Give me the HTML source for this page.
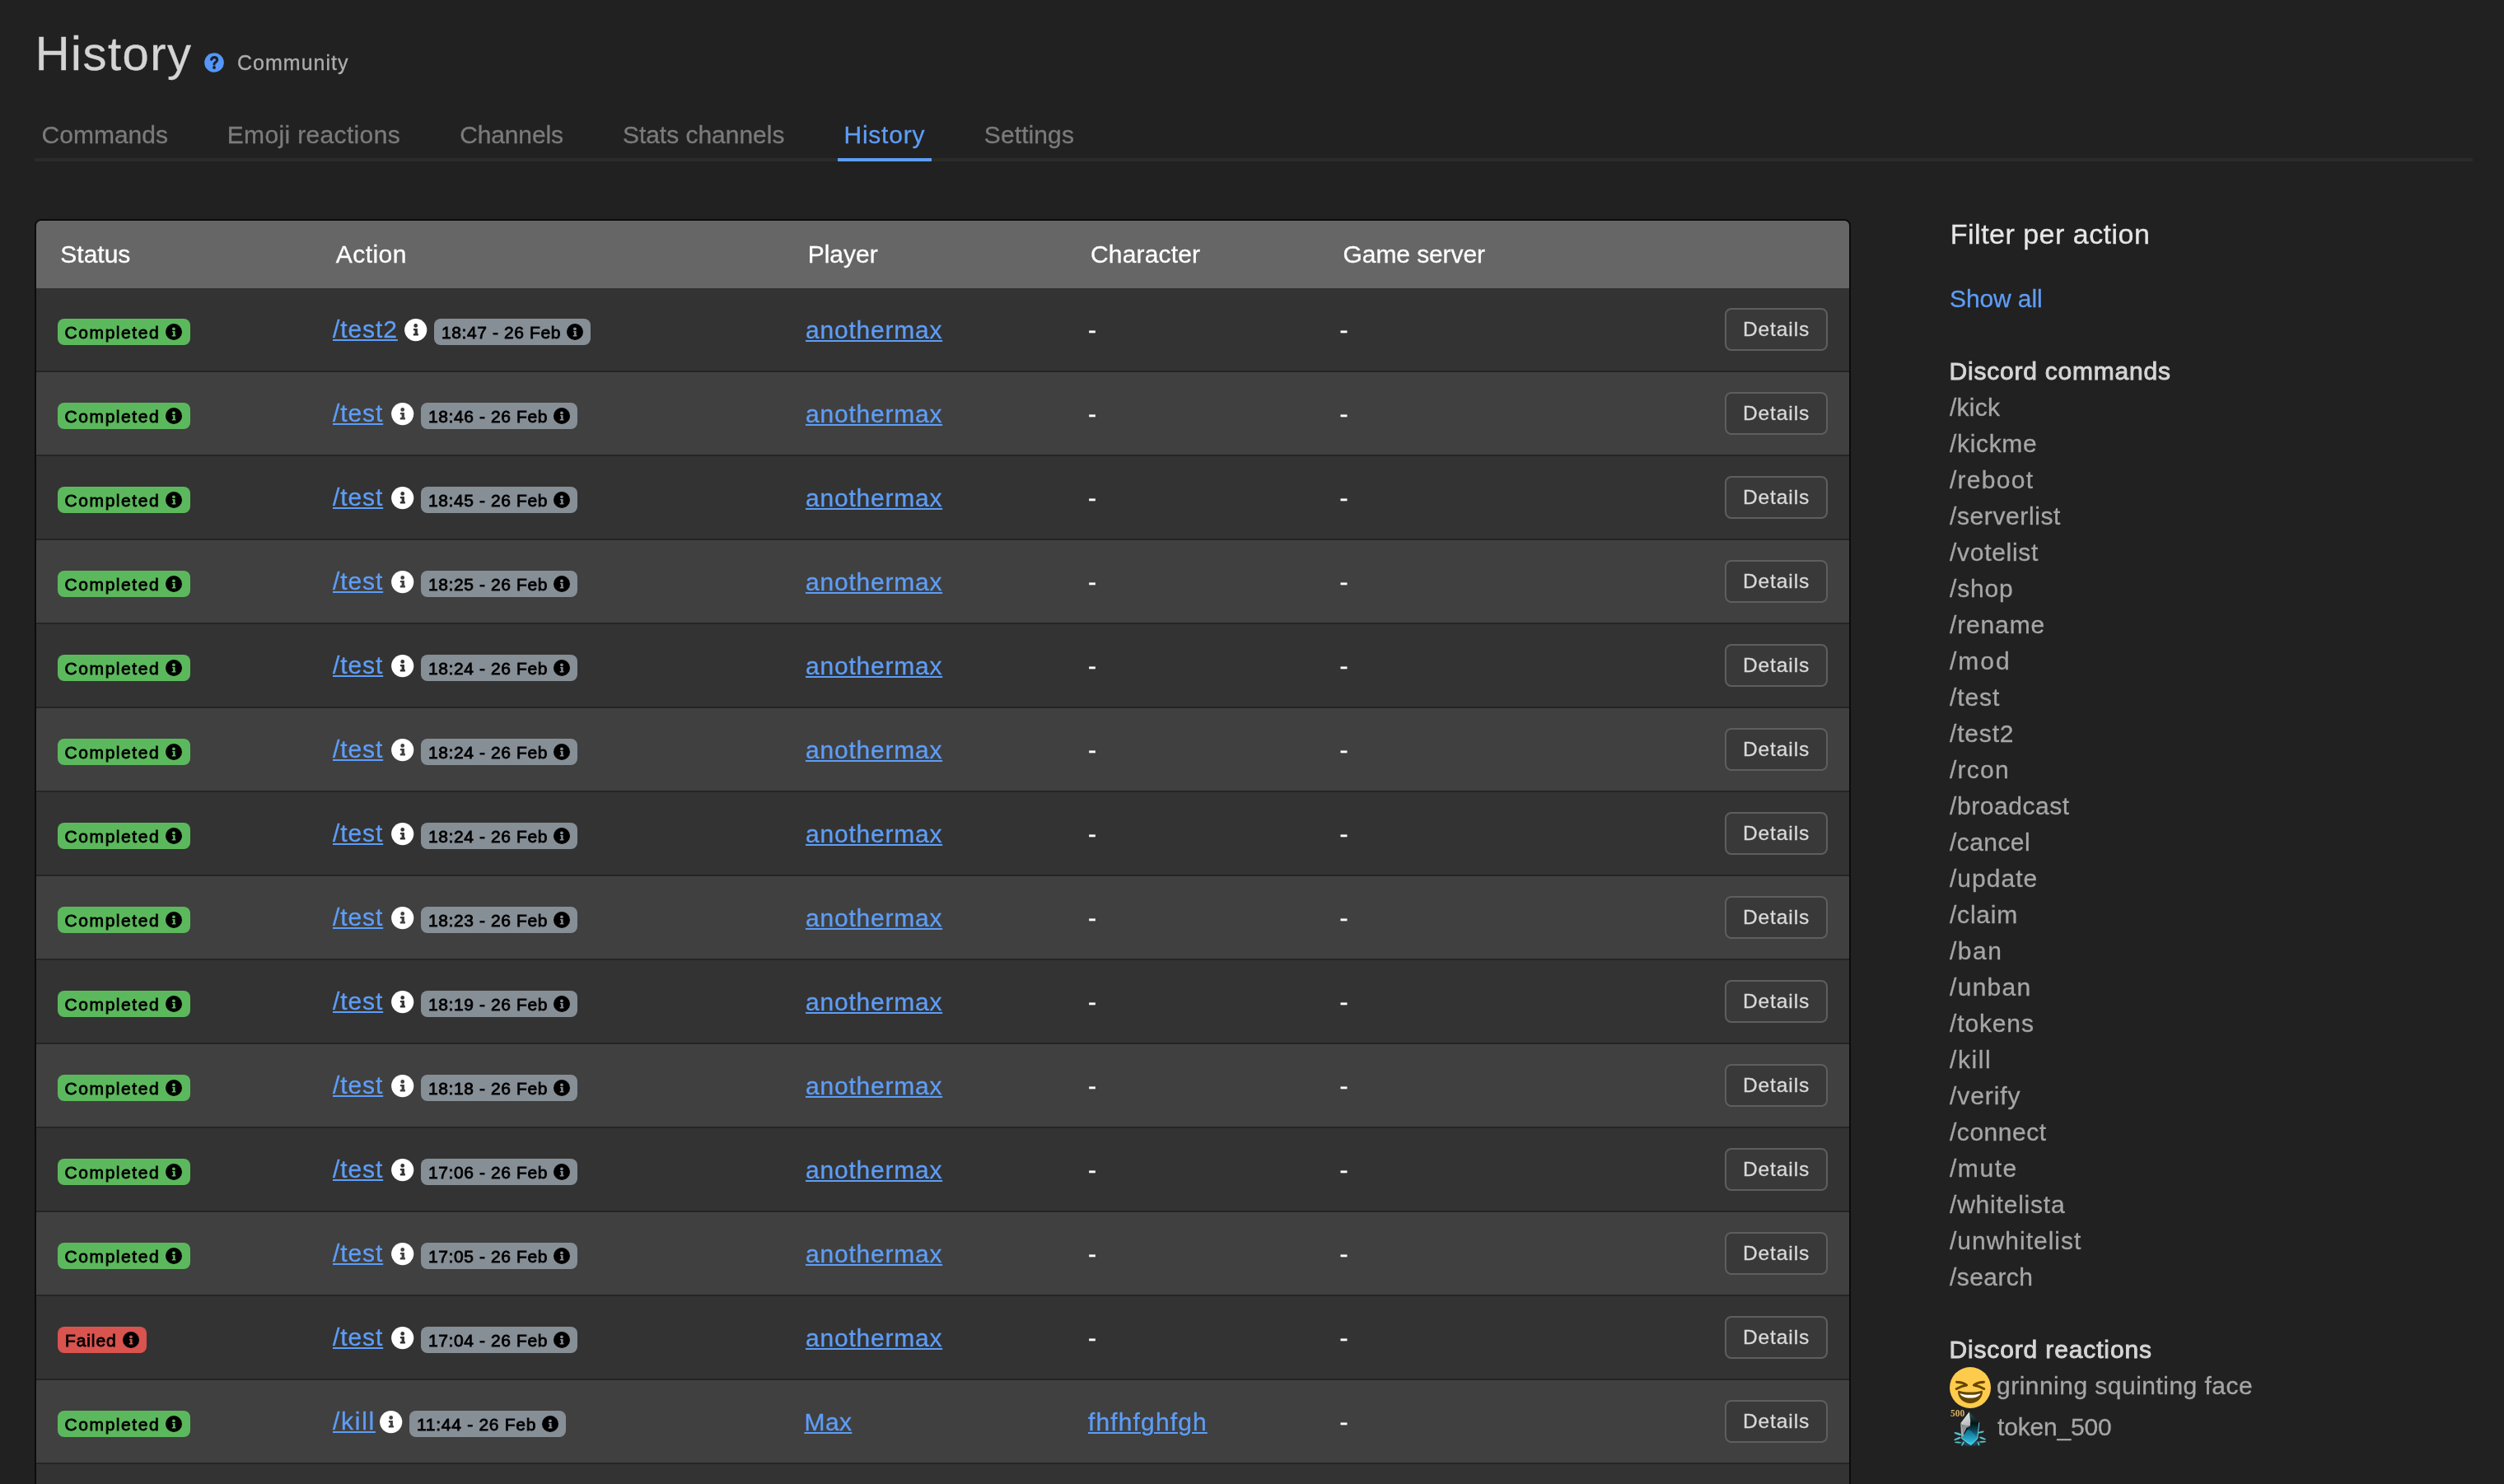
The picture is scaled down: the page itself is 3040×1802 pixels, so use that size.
<!DOCTYPE html>
<html><head><meta charset="utf-8"><title>History - Community</title><style>
html,body{margin:0;padding:0;}
body{width:3040px;height:1802px;overflow:hidden;background:#212121;font-family:"Liberation Sans", sans-serif;position:relative;}
.t{position:absolute;line-height:1;white-space:nowrap;-webkit-text-stroke:0.3px currentColor;}
.a{position:absolute;display:block;}
.box{position:absolute;box-sizing:border-box;}
.u{text-decoration:underline;text-decoration-thickness:2px;text-underline-offset:2px;}
</style></head>
<body>
<svg class="a" style="left:248px;top:64px" width="24" height="24" viewBox="0 0 24 24"><circle cx="12" cy="12" r="11.8" fill="#5596f8"/><path d="M8.6 8.3C9.2 6.4 10.6 5.6 12.1 5.6C14.2 5.6 15.7 6.9 15.7 8.8C15.7 10.7 14.2 11.3 13.2 12C12.4 12.5 12 13 12 14.1" stroke="#1b2230" stroke-width="3.1" fill="none" stroke-linecap="round"/><circle cx="12" cy="18" r="1.95" fill="#1b2230"/></svg>
<div class="box" style="left:42px;top:192px;width:2960px;height:4px;background:#2b2b2b"></div>
<div class="box" style="left:1017px;top:192px;width:114px;height:4px;background:#5e9df6"></div>
<div class="box" style="left:42px;top:266px;width:2205px;height:1600px;border:2px solid #0c0c0c;border-radius:8px;overflow:hidden;background:#333">
<div class="box" style="left:0;top:0;width:100%;height:82px;background:#666"></div>
<div class="box" style="left:0;top:82px;width:100%;height:102px;background:#333333;border-bottom:2px solid #242424"></div>
<div class="box" style="left:0;top:184px;width:100%;height:102px;background:#404040;border-bottom:2px solid #242424"></div>
<div class="box" style="left:0;top:286px;width:100%;height:102px;background:#333333;border-bottom:2px solid #242424"></div>
<div class="box" style="left:0;top:388px;width:100%;height:102px;background:#404040;border-bottom:2px solid #242424"></div>
<div class="box" style="left:0;top:490px;width:100%;height:102px;background:#333333;border-bottom:2px solid #242424"></div>
<div class="box" style="left:0;top:592px;width:100%;height:102px;background:#404040;border-bottom:2px solid #242424"></div>
<div class="box" style="left:0;top:694px;width:100%;height:102px;background:#333333;border-bottom:2px solid #242424"></div>
<div class="box" style="left:0;top:796px;width:100%;height:102px;background:#404040;border-bottom:2px solid #242424"></div>
<div class="box" style="left:0;top:898px;width:100%;height:102px;background:#333333;border-bottom:2px solid #242424"></div>
<div class="box" style="left:0;top:1000px;width:100%;height:102px;background:#404040;border-bottom:2px solid #242424"></div>
<div class="box" style="left:0;top:1102px;width:100%;height:102px;background:#333333;border-bottom:2px solid #242424"></div>
<div class="box" style="left:0;top:1204px;width:100%;height:102px;background:#404040;border-bottom:2px solid #242424"></div>
<div class="box" style="left:0;top:1306px;width:100%;height:102px;background:#333333;border-bottom:2px solid #242424"></div>
<div class="box" style="left:0;top:1408px;width:100%;height:102px;background:#404040;border-bottom:2px solid #242424"></div>
<div class="box" style="left:0;top:1510px;width:100%;height:102px;background:#333333;border-bottom:2px solid #242424"></div>
</div>
<div class="box" style="left:70px;top:387px;width:161px;height:32px;background:#5cb85c;border-radius:8px"></div>
<svg class="a" style="left:201px;top:393px" width="20" height="20" viewBox="0 0 20 20"><circle cx="10" cy="10" r="10" fill="#000"/><circle cx="9.95" cy="6.3" r="1.9" fill="#5cb85c"/><path d="M8.1 9.1H11.6V14H12.4V15.5H7.7V14H9.1V10.5H8.1Z" fill="#5cb85c"/></svg>
<svg class="a" style="left:491px;top:386.6px" width="28" height="28" viewBox="0 0 28 28"><circle cx="13.7" cy="13.6" r="13.6" fill="#fff"/><circle cx="13.7" cy="8.4" r="2.35" fill="#333333"/><path d="M10.9 12.1H15.9V18H16.9V20.5H10.8V18H12.6V14.2H10.9Z" fill="#333333"/></svg>
<div class="box" style="left:527px;top:387px;width:190px;height:32px;background:#868e96;border-radius:8px"></div>
<svg class="a" style="left:688px;top:393px" width="20" height="20" viewBox="0 0 20 20"><circle cx="10" cy="10" r="10" fill="#000"/><circle cx="9.95" cy="6.3" r="1.9" fill="#868e96"/><path d="M8.1 9.1H11.6V14H12.4V15.5H7.7V14H9.1V10.5H8.1Z" fill="#868e96"/></svg>
<div class="box" style="left:2094px;top:374px;width:125px;height:52px;border:2px solid #5e5e5e;background:#393939;border-radius:8px"></div>
<div class="box" style="left:70px;top:489px;width:161px;height:32px;background:#5cb85c;border-radius:8px"></div>
<svg class="a" style="left:201px;top:495px" width="20" height="20" viewBox="0 0 20 20"><circle cx="10" cy="10" r="10" fill="#000"/><circle cx="9.95" cy="6.3" r="1.9" fill="#5cb85c"/><path d="M8.1 9.1H11.6V14H12.4V15.5H7.7V14H9.1V10.5H8.1Z" fill="#5cb85c"/></svg>
<svg class="a" style="left:474.7px;top:488.6px" width="28" height="28" viewBox="0 0 28 28"><circle cx="13.7" cy="13.6" r="13.6" fill="#fff"/><circle cx="13.7" cy="8.4" r="2.35" fill="#404040"/><path d="M10.9 12.1H15.9V18H16.9V20.5H10.8V18H12.6V14.2H10.9Z" fill="#404040"/></svg>
<div class="box" style="left:511px;top:489px;width:190px;height:32px;background:#868e96;border-radius:8px"></div>
<svg class="a" style="left:672px;top:495px" width="20" height="20" viewBox="0 0 20 20"><circle cx="10" cy="10" r="10" fill="#000"/><circle cx="9.95" cy="6.3" r="1.9" fill="#868e96"/><path d="M8.1 9.1H11.6V14H12.4V15.5H7.7V14H9.1V10.5H8.1Z" fill="#868e96"/></svg>
<div class="box" style="left:2094px;top:476px;width:125px;height:52px;border:2px solid #5e5e5e;background:#393939;border-radius:8px"></div>
<div class="box" style="left:70px;top:591px;width:161px;height:32px;background:#5cb85c;border-radius:8px"></div>
<svg class="a" style="left:201px;top:597px" width="20" height="20" viewBox="0 0 20 20"><circle cx="10" cy="10" r="10" fill="#000"/><circle cx="9.95" cy="6.3" r="1.9" fill="#5cb85c"/><path d="M8.1 9.1H11.6V14H12.4V15.5H7.7V14H9.1V10.5H8.1Z" fill="#5cb85c"/></svg>
<svg class="a" style="left:474.7px;top:590.6px" width="28" height="28" viewBox="0 0 28 28"><circle cx="13.7" cy="13.6" r="13.6" fill="#fff"/><circle cx="13.7" cy="8.4" r="2.35" fill="#333333"/><path d="M10.9 12.1H15.9V18H16.9V20.5H10.8V18H12.6V14.2H10.9Z" fill="#333333"/></svg>
<div class="box" style="left:511px;top:591px;width:190px;height:32px;background:#868e96;border-radius:8px"></div>
<svg class="a" style="left:672px;top:597px" width="20" height="20" viewBox="0 0 20 20"><circle cx="10" cy="10" r="10" fill="#000"/><circle cx="9.95" cy="6.3" r="1.9" fill="#868e96"/><path d="M8.1 9.1H11.6V14H12.4V15.5H7.7V14H9.1V10.5H8.1Z" fill="#868e96"/></svg>
<div class="box" style="left:2094px;top:578px;width:125px;height:52px;border:2px solid #5e5e5e;background:#393939;border-radius:8px"></div>
<div class="box" style="left:70px;top:693px;width:161px;height:32px;background:#5cb85c;border-radius:8px"></div>
<svg class="a" style="left:201px;top:699px" width="20" height="20" viewBox="0 0 20 20"><circle cx="10" cy="10" r="10" fill="#000"/><circle cx="9.95" cy="6.3" r="1.9" fill="#5cb85c"/><path d="M8.1 9.1H11.6V14H12.4V15.5H7.7V14H9.1V10.5H8.1Z" fill="#5cb85c"/></svg>
<svg class="a" style="left:474.7px;top:692.6px" width="28" height="28" viewBox="0 0 28 28"><circle cx="13.7" cy="13.6" r="13.6" fill="#fff"/><circle cx="13.7" cy="8.4" r="2.35" fill="#404040"/><path d="M10.9 12.1H15.9V18H16.9V20.5H10.8V18H12.6V14.2H10.9Z" fill="#404040"/></svg>
<div class="box" style="left:511px;top:693px;width:190px;height:32px;background:#868e96;border-radius:8px"></div>
<svg class="a" style="left:672px;top:699px" width="20" height="20" viewBox="0 0 20 20"><circle cx="10" cy="10" r="10" fill="#000"/><circle cx="9.95" cy="6.3" r="1.9" fill="#868e96"/><path d="M8.1 9.1H11.6V14H12.4V15.5H7.7V14H9.1V10.5H8.1Z" fill="#868e96"/></svg>
<div class="box" style="left:2094px;top:680px;width:125px;height:52px;border:2px solid #5e5e5e;background:#393939;border-radius:8px"></div>
<div class="box" style="left:70px;top:795px;width:161px;height:32px;background:#5cb85c;border-radius:8px"></div>
<svg class="a" style="left:201px;top:801px" width="20" height="20" viewBox="0 0 20 20"><circle cx="10" cy="10" r="10" fill="#000"/><circle cx="9.95" cy="6.3" r="1.9" fill="#5cb85c"/><path d="M8.1 9.1H11.6V14H12.4V15.5H7.7V14H9.1V10.5H8.1Z" fill="#5cb85c"/></svg>
<svg class="a" style="left:474.7px;top:794.6px" width="28" height="28" viewBox="0 0 28 28"><circle cx="13.7" cy="13.6" r="13.6" fill="#fff"/><circle cx="13.7" cy="8.4" r="2.35" fill="#333333"/><path d="M10.9 12.1H15.9V18H16.9V20.5H10.8V18H12.6V14.2H10.9Z" fill="#333333"/></svg>
<div class="box" style="left:511px;top:795px;width:190px;height:32px;background:#868e96;border-radius:8px"></div>
<svg class="a" style="left:672px;top:801px" width="20" height="20" viewBox="0 0 20 20"><circle cx="10" cy="10" r="10" fill="#000"/><circle cx="9.95" cy="6.3" r="1.9" fill="#868e96"/><path d="M8.1 9.1H11.6V14H12.4V15.5H7.7V14H9.1V10.5H8.1Z" fill="#868e96"/></svg>
<div class="box" style="left:2094px;top:782px;width:125px;height:52px;border:2px solid #5e5e5e;background:#393939;border-radius:8px"></div>
<div class="box" style="left:70px;top:897px;width:161px;height:32px;background:#5cb85c;border-radius:8px"></div>
<svg class="a" style="left:201px;top:903px" width="20" height="20" viewBox="0 0 20 20"><circle cx="10" cy="10" r="10" fill="#000"/><circle cx="9.95" cy="6.3" r="1.9" fill="#5cb85c"/><path d="M8.1 9.1H11.6V14H12.4V15.5H7.7V14H9.1V10.5H8.1Z" fill="#5cb85c"/></svg>
<svg class="a" style="left:474.7px;top:896.6px" width="28" height="28" viewBox="0 0 28 28"><circle cx="13.7" cy="13.6" r="13.6" fill="#fff"/><circle cx="13.7" cy="8.4" r="2.35" fill="#404040"/><path d="M10.9 12.1H15.9V18H16.9V20.5H10.8V18H12.6V14.2H10.9Z" fill="#404040"/></svg>
<div class="box" style="left:511px;top:897px;width:190px;height:32px;background:#868e96;border-radius:8px"></div>
<svg class="a" style="left:672px;top:903px" width="20" height="20" viewBox="0 0 20 20"><circle cx="10" cy="10" r="10" fill="#000"/><circle cx="9.95" cy="6.3" r="1.9" fill="#868e96"/><path d="M8.1 9.1H11.6V14H12.4V15.5H7.7V14H9.1V10.5H8.1Z" fill="#868e96"/></svg>
<div class="box" style="left:2094px;top:884px;width:125px;height:52px;border:2px solid #5e5e5e;background:#393939;border-radius:8px"></div>
<div class="box" style="left:70px;top:999px;width:161px;height:32px;background:#5cb85c;border-radius:8px"></div>
<svg class="a" style="left:201px;top:1005px" width="20" height="20" viewBox="0 0 20 20"><circle cx="10" cy="10" r="10" fill="#000"/><circle cx="9.95" cy="6.3" r="1.9" fill="#5cb85c"/><path d="M8.1 9.1H11.6V14H12.4V15.5H7.7V14H9.1V10.5H8.1Z" fill="#5cb85c"/></svg>
<svg class="a" style="left:474.7px;top:998.6px" width="28" height="28" viewBox="0 0 28 28"><circle cx="13.7" cy="13.6" r="13.6" fill="#fff"/><circle cx="13.7" cy="8.4" r="2.35" fill="#333333"/><path d="M10.9 12.1H15.9V18H16.9V20.5H10.8V18H12.6V14.2H10.9Z" fill="#333333"/></svg>
<div class="box" style="left:511px;top:999px;width:190px;height:32px;background:#868e96;border-radius:8px"></div>
<svg class="a" style="left:672px;top:1005px" width="20" height="20" viewBox="0 0 20 20"><circle cx="10" cy="10" r="10" fill="#000"/><circle cx="9.95" cy="6.3" r="1.9" fill="#868e96"/><path d="M8.1 9.1H11.6V14H12.4V15.5H7.7V14H9.1V10.5H8.1Z" fill="#868e96"/></svg>
<div class="box" style="left:2094px;top:986px;width:125px;height:52px;border:2px solid #5e5e5e;background:#393939;border-radius:8px"></div>
<div class="box" style="left:70px;top:1101px;width:161px;height:32px;background:#5cb85c;border-radius:8px"></div>
<svg class="a" style="left:201px;top:1107px" width="20" height="20" viewBox="0 0 20 20"><circle cx="10" cy="10" r="10" fill="#000"/><circle cx="9.95" cy="6.3" r="1.9" fill="#5cb85c"/><path d="M8.1 9.1H11.6V14H12.4V15.5H7.7V14H9.1V10.5H8.1Z" fill="#5cb85c"/></svg>
<svg class="a" style="left:474.7px;top:1100.6px" width="28" height="28" viewBox="0 0 28 28"><circle cx="13.7" cy="13.6" r="13.6" fill="#fff"/><circle cx="13.7" cy="8.4" r="2.35" fill="#404040"/><path d="M10.9 12.1H15.9V18H16.9V20.5H10.8V18H12.6V14.2H10.9Z" fill="#404040"/></svg>
<div class="box" style="left:511px;top:1101px;width:190px;height:32px;background:#868e96;border-radius:8px"></div>
<svg class="a" style="left:672px;top:1107px" width="20" height="20" viewBox="0 0 20 20"><circle cx="10" cy="10" r="10" fill="#000"/><circle cx="9.95" cy="6.3" r="1.9" fill="#868e96"/><path d="M8.1 9.1H11.6V14H12.4V15.5H7.7V14H9.1V10.5H8.1Z" fill="#868e96"/></svg>
<div class="box" style="left:2094px;top:1088px;width:125px;height:52px;border:2px solid #5e5e5e;background:#393939;border-radius:8px"></div>
<div class="box" style="left:70px;top:1203px;width:161px;height:32px;background:#5cb85c;border-radius:8px"></div>
<svg class="a" style="left:201px;top:1209px" width="20" height="20" viewBox="0 0 20 20"><circle cx="10" cy="10" r="10" fill="#000"/><circle cx="9.95" cy="6.3" r="1.9" fill="#5cb85c"/><path d="M8.1 9.1H11.6V14H12.4V15.5H7.7V14H9.1V10.5H8.1Z" fill="#5cb85c"/></svg>
<svg class="a" style="left:474.7px;top:1202.6px" width="28" height="28" viewBox="0 0 28 28"><circle cx="13.7" cy="13.6" r="13.6" fill="#fff"/><circle cx="13.7" cy="8.4" r="2.35" fill="#333333"/><path d="M10.9 12.1H15.9V18H16.9V20.5H10.8V18H12.6V14.2H10.9Z" fill="#333333"/></svg>
<div class="box" style="left:511px;top:1203px;width:190px;height:32px;background:#868e96;border-radius:8px"></div>
<svg class="a" style="left:672px;top:1209px" width="20" height="20" viewBox="0 0 20 20"><circle cx="10" cy="10" r="10" fill="#000"/><circle cx="9.95" cy="6.3" r="1.9" fill="#868e96"/><path d="M8.1 9.1H11.6V14H12.4V15.5H7.7V14H9.1V10.5H8.1Z" fill="#868e96"/></svg>
<div class="box" style="left:2094px;top:1190px;width:125px;height:52px;border:2px solid #5e5e5e;background:#393939;border-radius:8px"></div>
<div class="box" style="left:70px;top:1305px;width:161px;height:32px;background:#5cb85c;border-radius:8px"></div>
<svg class="a" style="left:201px;top:1311px" width="20" height="20" viewBox="0 0 20 20"><circle cx="10" cy="10" r="10" fill="#000"/><circle cx="9.95" cy="6.3" r="1.9" fill="#5cb85c"/><path d="M8.1 9.1H11.6V14H12.4V15.5H7.7V14H9.1V10.5H8.1Z" fill="#5cb85c"/></svg>
<svg class="a" style="left:474.7px;top:1304.6px" width="28" height="28" viewBox="0 0 28 28"><circle cx="13.7" cy="13.6" r="13.6" fill="#fff"/><circle cx="13.7" cy="8.4" r="2.35" fill="#404040"/><path d="M10.9 12.1H15.9V18H16.9V20.5H10.8V18H12.6V14.2H10.9Z" fill="#404040"/></svg>
<div class="box" style="left:511px;top:1305px;width:190px;height:32px;background:#868e96;border-radius:8px"></div>
<svg class="a" style="left:672px;top:1311px" width="20" height="20" viewBox="0 0 20 20"><circle cx="10" cy="10" r="10" fill="#000"/><circle cx="9.95" cy="6.3" r="1.9" fill="#868e96"/><path d="M8.1 9.1H11.6V14H12.4V15.5H7.7V14H9.1V10.5H8.1Z" fill="#868e96"/></svg>
<div class="box" style="left:2094px;top:1292px;width:125px;height:52px;border:2px solid #5e5e5e;background:#393939;border-radius:8px"></div>
<div class="box" style="left:70px;top:1407px;width:161px;height:32px;background:#5cb85c;border-radius:8px"></div>
<svg class="a" style="left:201px;top:1413px" width="20" height="20" viewBox="0 0 20 20"><circle cx="10" cy="10" r="10" fill="#000"/><circle cx="9.95" cy="6.3" r="1.9" fill="#5cb85c"/><path d="M8.1 9.1H11.6V14H12.4V15.5H7.7V14H9.1V10.5H8.1Z" fill="#5cb85c"/></svg>
<svg class="a" style="left:474.7px;top:1406.6px" width="28" height="28" viewBox="0 0 28 28"><circle cx="13.7" cy="13.6" r="13.6" fill="#fff"/><circle cx="13.7" cy="8.4" r="2.35" fill="#333333"/><path d="M10.9 12.1H15.9V18H16.9V20.5H10.8V18H12.6V14.2H10.9Z" fill="#333333"/></svg>
<div class="box" style="left:511px;top:1407px;width:190px;height:32px;background:#868e96;border-radius:8px"></div>
<svg class="a" style="left:672px;top:1413px" width="20" height="20" viewBox="0 0 20 20"><circle cx="10" cy="10" r="10" fill="#000"/><circle cx="9.95" cy="6.3" r="1.9" fill="#868e96"/><path d="M8.1 9.1H11.6V14H12.4V15.5H7.7V14H9.1V10.5H8.1Z" fill="#868e96"/></svg>
<div class="box" style="left:2094px;top:1394px;width:125px;height:52px;border:2px solid #5e5e5e;background:#393939;border-radius:8px"></div>
<div class="box" style="left:70px;top:1509px;width:161px;height:32px;background:#5cb85c;border-radius:8px"></div>
<svg class="a" style="left:201px;top:1515px" width="20" height="20" viewBox="0 0 20 20"><circle cx="10" cy="10" r="10" fill="#000"/><circle cx="9.95" cy="6.3" r="1.9" fill="#5cb85c"/><path d="M8.1 9.1H11.6V14H12.4V15.5H7.7V14H9.1V10.5H8.1Z" fill="#5cb85c"/></svg>
<svg class="a" style="left:474.7px;top:1508.6px" width="28" height="28" viewBox="0 0 28 28"><circle cx="13.7" cy="13.6" r="13.6" fill="#fff"/><circle cx="13.7" cy="8.4" r="2.35" fill="#404040"/><path d="M10.9 12.1H15.9V18H16.9V20.5H10.8V18H12.6V14.2H10.9Z" fill="#404040"/></svg>
<div class="box" style="left:511px;top:1509px;width:190px;height:32px;background:#868e96;border-radius:8px"></div>
<svg class="a" style="left:672px;top:1515px" width="20" height="20" viewBox="0 0 20 20"><circle cx="10" cy="10" r="10" fill="#000"/><circle cx="9.95" cy="6.3" r="1.9" fill="#868e96"/><path d="M8.1 9.1H11.6V14H12.4V15.5H7.7V14H9.1V10.5H8.1Z" fill="#868e96"/></svg>
<div class="box" style="left:2094px;top:1496px;width:125px;height:52px;border:2px solid #5e5e5e;background:#393939;border-radius:8px"></div>
<div class="box" style="left:70px;top:1611px;width:108px;height:32px;background:#d9534f;border-radius:8px"></div>
<svg class="a" style="left:149px;top:1617px" width="20" height="20" viewBox="0 0 20 20"><circle cx="10" cy="10" r="10" fill="#000"/><circle cx="9.95" cy="6.3" r="1.9" fill="#d9534f"/><path d="M8.1 9.1H11.6V14H12.4V15.5H7.7V14H9.1V10.5H8.1Z" fill="#d9534f"/></svg>
<svg class="a" style="left:474.7px;top:1610.6px" width="28" height="28" viewBox="0 0 28 28"><circle cx="13.7" cy="13.6" r="13.6" fill="#fff"/><circle cx="13.7" cy="8.4" r="2.35" fill="#333333"/><path d="M10.9 12.1H15.9V18H16.9V20.5H10.8V18H12.6V14.2H10.9Z" fill="#333333"/></svg>
<div class="box" style="left:511px;top:1611px;width:190px;height:32px;background:#868e96;border-radius:8px"></div>
<svg class="a" style="left:672px;top:1617px" width="20" height="20" viewBox="0 0 20 20"><circle cx="10" cy="10" r="10" fill="#000"/><circle cx="9.95" cy="6.3" r="1.9" fill="#868e96"/><path d="M8.1 9.1H11.6V14H12.4V15.5H7.7V14H9.1V10.5H8.1Z" fill="#868e96"/></svg>
<div class="box" style="left:2094px;top:1598px;width:125px;height:52px;border:2px solid #5e5e5e;background:#393939;border-radius:8px"></div>
<div class="box" style="left:70px;top:1713px;width:161px;height:32px;background:#5cb85c;border-radius:8px"></div>
<svg class="a" style="left:201px;top:1719px" width="20" height="20" viewBox="0 0 20 20"><circle cx="10" cy="10" r="10" fill="#000"/><circle cx="9.95" cy="6.3" r="1.9" fill="#5cb85c"/><path d="M8.1 9.1H11.6V14H12.4V15.5H7.7V14H9.1V10.5H8.1Z" fill="#5cb85c"/></svg>
<svg class="a" style="left:461.3px;top:1712.6px" width="28" height="28" viewBox="0 0 28 28"><circle cx="13.7" cy="13.6" r="13.6" fill="#fff"/><circle cx="13.7" cy="8.4" r="2.35" fill="#404040"/><path d="M10.9 12.1H15.9V18H16.9V20.5H10.8V18H12.6V14.2H10.9Z" fill="#404040"/></svg>
<div class="box" style="left:497px;top:1713px;width:190px;height:32px;background:#868e96;border-radius:8px"></div>
<svg class="a" style="left:658px;top:1719px" width="20" height="20" viewBox="0 0 20 20"><circle cx="10" cy="10" r="10" fill="#000"/><circle cx="9.95" cy="6.3" r="1.9" fill="#868e96"/><path d="M8.1 9.1H11.6V14H12.4V15.5H7.7V14H9.1V10.5H8.1Z" fill="#868e96"/></svg>
<div class="box" style="left:2094px;top:1700px;width:125px;height:52px;border:2px solid #5e5e5e;background:#393939;border-radius:8px"></div>
<div class="box" style="left:70px;top:1815px;width:161px;height:32px;background:#5cb85c;border-radius:8px"></div>
<svg class="a" style="left:201px;top:1821px" width="20" height="20" viewBox="0 0 20 20"><circle cx="10" cy="10" r="10" fill="#000"/><circle cx="9.95" cy="6.3" r="1.9" fill="#5cb85c"/><path d="M8.1 9.1H11.6V14H12.4V15.5H7.7V14H9.1V10.5H8.1Z" fill="#5cb85c"/></svg>
<svg class="a" style="left:474.7px;top:1814.6px" width="28" height="28" viewBox="0 0 28 28"><circle cx="13.7" cy="13.6" r="13.6" fill="#fff"/><circle cx="13.7" cy="8.4" r="2.35" fill="#333333"/><path d="M10.9 12.1H15.9V18H16.9V20.5H10.8V18H12.6V14.2H10.9Z" fill="#333333"/></svg>
<div class="box" style="left:511px;top:1815px;width:190px;height:32px;background:#868e96;border-radius:8px"></div>
<svg class="a" style="left:672px;top:1821px" width="20" height="20" viewBox="0 0 20 20"><circle cx="10" cy="10" r="10" fill="#000"/><circle cx="9.95" cy="6.3" r="1.9" fill="#868e96"/><path d="M8.1 9.1H11.6V14H12.4V15.5H7.7V14H9.1V10.5H8.1Z" fill="#868e96"/></svg>
<div class="box" style="left:2094px;top:1802px;width:125px;height:52px;border:2px solid #5e5e5e;background:#393939;border-radius:8px"></div>
<svg class="a" style="left:2367px;top:1660px" width="50" height="50" viewBox="0 0 50 50"><circle cx="25" cy="25" r="25" fill="#ffcb4c"/><path d="M8.5 18.2C13 18.2 17.5 19.6 20.6 22C16.5 22.6 12 24.2 8.2 26.4" stroke="#664500" stroke-width="2.9" fill="none" stroke-linecap="round" stroke-linejoin="round"/><path d="M41.5 18.2C37 18.2 32.5 19.6 29.4 22C33.5 22.6 38 24.2 41.8 26.4" stroke="#664500" stroke-width="2.9" fill="none" stroke-linecap="round" stroke-linejoin="round"/><path d="M10 30C10 28.8 11 28.6 12 28.9C16 30 20 30.5 25 30.5C30 30.5 34 30 38 28.9C39 28.6 40 28.8 40 30C40 37 33.5 44 25 44C16.5 44 10 37 10 30Z" fill="#664500"/><path d="M12.3 32C16 33.3 20 33.8 25 33.8C30 33.8 34 33.3 37.6 32C36.5 35.5 31.5 37.5 25 37.5C18.5 37.5 13.5 35.5 12.3 32Z" fill="#fff"/></svg>
<svg class="a" style="left:2362px;top:1708px;will-change:transform" width="50" height="50" viewBox="0 0 50 50"><defs><linearGradient id="cg" x1="0" y1="0" x2="0" y2="1"><stop offset="0" stop-color="#2a5860"/><stop offset="0.35" stop-color="#061418"/><stop offset="0.6" stop-color="#0d4f63"/><stop offset="1" stop-color="#3fd6f5"/></linearGradient><linearGradient id="wg" x1="0" y1="0" x2="0.3" y2="1"><stop offset="0" stop-color="#f2f4f2"/><stop offset="1" stop-color="#b9bebc"/></linearGradient><linearGradient id="bg2" x1="0" y1="0" x2="0" y2="1"><stop offset="0" stop-color="#0e6685"/><stop offset="1" stop-color="#34c8ee"/></linearGradient><radialGradient id="gl" cx="0.5" cy="0.5" r="0.5"><stop offset="0" stop-color="#2a9fc0" stop-opacity="0.6"/><stop offset="1" stop-color="#2a9fc0" stop-opacity="0"/></radialGradient></defs><ellipse cx="30" cy="44" rx="16" ry="5" fill="url(#gl)"/><g fill="#5fdcec" opacity="0.85"><ellipse cx="15" cy="33" rx="4.8" ry="1.2" transform="rotate(18 15 33)"/><ellipse cx="14.5" cy="39" rx="4.5" ry="1.2" transform="rotate(-22 14.5 39)"/><ellipse cx="15" cy="43.5" rx="4" ry="1" transform="rotate(3 15 43.5)"/><ellipse cx="43" cy="31" rx="3.8" ry="1.1" transform="rotate(-12 43 31)"/><ellipse cx="45" cy="38.5" rx="4.2" ry="1.2" transform="rotate(22 45 38.5)"/><ellipse cx="45" cy="42.8" rx="4.2" ry="1" transform="rotate(-4 45 42.8)"/><ellipse cx="21" cy="45" rx="3" ry="0.9" transform="rotate(-60 21 45)"/><ellipse cx="40" cy="45" rx="3" ry="0.9" transform="rotate(70 40 45)"/></g><path d="M28.7 6.5L40.8 19.4L38.8 38.8L30.7 46.5L19.4 38.4L18.2 20.2Z" fill="url(#cg)"/><path d="M28.7 6.5L18.2 20.2L20.4 22.5L29.9 23.5L30.2 17Z" fill="url(#wg)"/><path d="M18.2 20.2L20.4 22.5L22 35L19.4 38.4Z" fill="#a6acab"/><path d="M20.4 22.5L29.9 23.5L25.5 26L22 35Z" fill="#8d9493"/><path d="M25.9 25.5L27.6 26.6L23.6 34L21.9 33.4Z" fill="#050b0d"/><path d="M22 35L26.5 27.5L31 29.5L38.8 38.8L30.7 46.5L19.4 38.4Z" fill="url(#bg2)"/><path d="M19.4 38.4L30.7 46.5L38.8 38.8L40.8 19.4" stroke="#8af3ff" stroke-width="1" fill="none" opacity="0.8"/><text x="6" y="12" font-family="Liberation Serif" font-weight="700" font-size="11.5" fill="#d8b060">500</text></svg>
<div id="txt" style="position:absolute;left:0;top:0;width:3040px;height:1802px;will-change:transform">
<div class="t" style="left:42.70px;top:36.30px;font-size:58px;color:#d4d4d4;letter-spacing:1.474px;">History</div>
<div class="t" style="left:288.00px;top:63.84px;font-size:25px;color:#adadad;letter-spacing:1.01px;">Community</div>
<div class="t" style="left:50.60px;top:148.60px;font-size:30px;color:#7b7b7b;">Commands</div>
<div class="t" style="left:275.70px;top:148.60px;font-size:30px;color:#7b7b7b;letter-spacing:0.352px;">Emoji reactions</div>
<div class="t" style="left:558.30px;top:148.60px;font-size:30px;color:#7b7b7b;letter-spacing:-0.165px;">Channels</div>
<div class="t" style="left:755.90px;top:148.60px;font-size:30px;color:#7b7b7b;letter-spacing:-0.022px;">Stats channels</div>
<div class="t" style="left:1024.50px;top:148.60px;font-size:30px;color:#5e9df6;letter-spacing:0.76px;">History</div>
<div class="t" style="left:1194.80px;top:148.60px;font-size:30px;color:#7b7b7b;letter-spacing:0.1px;">Settings</div>
<div class="t" style="left:73.30px;top:293.61px;font-size:30px;color:#ffffff;">Status</div>
<div class="t" style="left:407.80px;top:293.61px;font-size:30px;color:#ffffff;letter-spacing:0.441px;">Action</div>
<div class="t" style="left:980.70px;top:293.61px;font-size:30px;color:#ffffff;">Player</div>
<div class="t" style="left:1324.00px;top:293.61px;font-size:30px;color:#ffffff;letter-spacing:0.159px;">Character</div>
<div class="t" style="left:1630.60px;top:293.61px;font-size:30px;color:#ffffff;letter-spacing:-0.099px;">Game server</div>
<div class="t" style="left:78.60px;top:393.22px;font-size:21px;color:#000;letter-spacing:1.566px;-webkit-text-stroke:0.8px #000;">Completed</div>
<div class="t" style="left:404.00px;top:385.21px;font-size:30px;color:#5e9df6;letter-spacing:0.922px;"><span class="u">/test2</span></div>
<div class="t" style="left:536.00px;top:393.22px;font-size:21px;color:#000;letter-spacing:0.599px;-webkit-text-stroke:0.8px #000;">18:47 - 26 Feb</div>
<div class="t" style="left:978.00px;top:385.61px;font-size:30px;color:#5e9df6;letter-spacing:0.775px;"><span class="u">anothermax</span></div>
<div class="t" style="left:1321.00px;top:385.61px;font-size:30px;color:#ffffff;">-</div>
<div class="t" style="left:1626.60px;top:385.61px;font-size:30px;color:#ffffff;">-</div>
<div class="t" style="left:2116.00px;top:388.26px;font-size:24.5px;color:#d9d9d9;letter-spacing:0.894px;">Details</div>
<div class="t" style="left:78.60px;top:495.22px;font-size:21px;color:#000;letter-spacing:1.566px;-webkit-text-stroke:0.8px #000;">Completed</div>
<div class="t" style="left:404.00px;top:487.21px;font-size:30px;color:#5e9df6;letter-spacing:0.911px;"><span class="u">/test</span></div>
<div class="t" style="left:520.00px;top:495.22px;font-size:21px;color:#000;letter-spacing:0.599px;-webkit-text-stroke:0.8px #000;">18:46 - 26 Feb</div>
<div class="t" style="left:978.00px;top:487.61px;font-size:30px;color:#5e9df6;letter-spacing:0.775px;"><span class="u">anothermax</span></div>
<div class="t" style="left:1321.00px;top:487.61px;font-size:30px;color:#ffffff;">-</div>
<div class="t" style="left:1626.60px;top:487.61px;font-size:30px;color:#ffffff;">-</div>
<div class="t" style="left:2116.00px;top:490.26px;font-size:24.5px;color:#d9d9d9;letter-spacing:0.894px;">Details</div>
<div class="t" style="left:78.60px;top:597.22px;font-size:21px;color:#000;letter-spacing:1.566px;-webkit-text-stroke:0.8px #000;">Completed</div>
<div class="t" style="left:404.00px;top:589.21px;font-size:30px;color:#5e9df6;letter-spacing:0.911px;"><span class="u">/test</span></div>
<div class="t" style="left:520.00px;top:597.22px;font-size:21px;color:#000;letter-spacing:0.599px;-webkit-text-stroke:0.8px #000;">18:45 - 26 Feb</div>
<div class="t" style="left:978.00px;top:589.61px;font-size:30px;color:#5e9df6;letter-spacing:0.775px;"><span class="u">anothermax</span></div>
<div class="t" style="left:1321.00px;top:589.61px;font-size:30px;color:#ffffff;">-</div>
<div class="t" style="left:1626.60px;top:589.61px;font-size:30px;color:#ffffff;">-</div>
<div class="t" style="left:2116.00px;top:592.26px;font-size:24.5px;color:#d9d9d9;letter-spacing:0.894px;">Details</div>
<div class="t" style="left:78.60px;top:699.22px;font-size:21px;color:#000;letter-spacing:1.566px;-webkit-text-stroke:0.8px #000;">Completed</div>
<div class="t" style="left:404.00px;top:691.21px;font-size:30px;color:#5e9df6;letter-spacing:0.911px;"><span class="u">/test</span></div>
<div class="t" style="left:520.00px;top:699.22px;font-size:21px;color:#000;letter-spacing:0.599px;-webkit-text-stroke:0.8px #000;">18:25 - 26 Feb</div>
<div class="t" style="left:978.00px;top:691.61px;font-size:30px;color:#5e9df6;letter-spacing:0.775px;"><span class="u">anothermax</span></div>
<div class="t" style="left:1321.00px;top:691.61px;font-size:30px;color:#ffffff;">-</div>
<div class="t" style="left:1626.60px;top:691.61px;font-size:30px;color:#ffffff;">-</div>
<div class="t" style="left:2116.00px;top:694.26px;font-size:24.5px;color:#d9d9d9;letter-spacing:0.894px;">Details</div>
<div class="t" style="left:78.60px;top:801.22px;font-size:21px;color:#000;letter-spacing:1.566px;-webkit-text-stroke:0.8px #000;">Completed</div>
<div class="t" style="left:404.00px;top:793.21px;font-size:30px;color:#5e9df6;letter-spacing:0.911px;"><span class="u">/test</span></div>
<div class="t" style="left:520.00px;top:801.22px;font-size:21px;color:#000;letter-spacing:0.599px;-webkit-text-stroke:0.8px #000;">18:24 - 26 Feb</div>
<div class="t" style="left:978.00px;top:793.61px;font-size:30px;color:#5e9df6;letter-spacing:0.775px;"><span class="u">anothermax</span></div>
<div class="t" style="left:1321.00px;top:793.61px;font-size:30px;color:#ffffff;">-</div>
<div class="t" style="left:1626.60px;top:793.61px;font-size:30px;color:#ffffff;">-</div>
<div class="t" style="left:2116.00px;top:796.26px;font-size:24.5px;color:#d9d9d9;letter-spacing:0.894px;">Details</div>
<div class="t" style="left:78.60px;top:903.22px;font-size:21px;color:#000;letter-spacing:1.566px;-webkit-text-stroke:0.8px #000;">Completed</div>
<div class="t" style="left:404.00px;top:895.21px;font-size:30px;color:#5e9df6;letter-spacing:0.911px;"><span class="u">/test</span></div>
<div class="t" style="left:520.00px;top:903.22px;font-size:21px;color:#000;letter-spacing:0.599px;-webkit-text-stroke:0.8px #000;">18:24 - 26 Feb</div>
<div class="t" style="left:978.00px;top:895.61px;font-size:30px;color:#5e9df6;letter-spacing:0.775px;"><span class="u">anothermax</span></div>
<div class="t" style="left:1321.00px;top:895.61px;font-size:30px;color:#ffffff;">-</div>
<div class="t" style="left:1626.60px;top:895.61px;font-size:30px;color:#ffffff;">-</div>
<div class="t" style="left:2116.00px;top:898.26px;font-size:24.5px;color:#d9d9d9;letter-spacing:0.894px;">Details</div>
<div class="t" style="left:78.60px;top:1005.22px;font-size:21px;color:#000;letter-spacing:1.566px;-webkit-text-stroke:0.8px #000;">Completed</div>
<div class="t" style="left:404.00px;top:997.21px;font-size:30px;color:#5e9df6;letter-spacing:0.911px;"><span class="u">/test</span></div>
<div class="t" style="left:520.00px;top:1005.22px;font-size:21px;color:#000;letter-spacing:0.599px;-webkit-text-stroke:0.8px #000;">18:24 - 26 Feb</div>
<div class="t" style="left:978.00px;top:997.61px;font-size:30px;color:#5e9df6;letter-spacing:0.775px;"><span class="u">anothermax</span></div>
<div class="t" style="left:1321.00px;top:997.61px;font-size:30px;color:#ffffff;">-</div>
<div class="t" style="left:1626.60px;top:997.61px;font-size:30px;color:#ffffff;">-</div>
<div class="t" style="left:2116.00px;top:1000.26px;font-size:24.5px;color:#d9d9d9;letter-spacing:0.894px;">Details</div>
<div class="t" style="left:78.60px;top:1107.22px;font-size:21px;color:#000;letter-spacing:1.566px;-webkit-text-stroke:0.8px #000;">Completed</div>
<div class="t" style="left:404.00px;top:1099.20px;font-size:30px;color:#5e9df6;letter-spacing:0.911px;"><span class="u">/test</span></div>
<div class="t" style="left:520.00px;top:1107.22px;font-size:21px;color:#000;letter-spacing:0.599px;-webkit-text-stroke:0.8px #000;">18:23 - 26 Feb</div>
<div class="t" style="left:978.00px;top:1099.61px;font-size:30px;color:#5e9df6;letter-spacing:0.775px;"><span class="u">anothermax</span></div>
<div class="t" style="left:1321.00px;top:1099.61px;font-size:30px;color:#ffffff;">-</div>
<div class="t" style="left:1626.60px;top:1099.61px;font-size:30px;color:#ffffff;">-</div>
<div class="t" style="left:2116.00px;top:1102.26px;font-size:24.5px;color:#d9d9d9;letter-spacing:0.894px;">Details</div>
<div class="t" style="left:78.60px;top:1209.22px;font-size:21px;color:#000;letter-spacing:1.566px;-webkit-text-stroke:0.8px #000;">Completed</div>
<div class="t" style="left:404.00px;top:1201.20px;font-size:30px;color:#5e9df6;letter-spacing:0.911px;"><span class="u">/test</span></div>
<div class="t" style="left:520.00px;top:1209.22px;font-size:21px;color:#000;letter-spacing:0.599px;-webkit-text-stroke:0.8px #000;">18:19 - 26 Feb</div>
<div class="t" style="left:978.00px;top:1201.61px;font-size:30px;color:#5e9df6;letter-spacing:0.775px;"><span class="u">anothermax</span></div>
<div class="t" style="left:1321.00px;top:1201.61px;font-size:30px;color:#ffffff;">-</div>
<div class="t" style="left:1626.60px;top:1201.61px;font-size:30px;color:#ffffff;">-</div>
<div class="t" style="left:2116.00px;top:1204.26px;font-size:24.5px;color:#d9d9d9;letter-spacing:0.894px;">Details</div>
<div class="t" style="left:78.60px;top:1311.22px;font-size:21px;color:#000;letter-spacing:1.566px;-webkit-text-stroke:0.8px #000;">Completed</div>
<div class="t" style="left:404.00px;top:1303.20px;font-size:30px;color:#5e9df6;letter-spacing:0.911px;"><span class="u">/test</span></div>
<div class="t" style="left:520.00px;top:1311.22px;font-size:21px;color:#000;letter-spacing:0.599px;-webkit-text-stroke:0.8px #000;">18:18 - 26 Feb</div>
<div class="t" style="left:978.00px;top:1303.61px;font-size:30px;color:#5e9df6;letter-spacing:0.775px;"><span class="u">anothermax</span></div>
<div class="t" style="left:1321.00px;top:1303.61px;font-size:30px;color:#ffffff;">-</div>
<div class="t" style="left:1626.60px;top:1303.61px;font-size:30px;color:#ffffff;">-</div>
<div class="t" style="left:2116.00px;top:1306.26px;font-size:24.5px;color:#d9d9d9;letter-spacing:0.894px;">Details</div>
<div class="t" style="left:78.60px;top:1413.22px;font-size:21px;color:#000;letter-spacing:1.566px;-webkit-text-stroke:0.8px #000;">Completed</div>
<div class="t" style="left:404.00px;top:1405.20px;font-size:30px;color:#5e9df6;letter-spacing:0.911px;"><span class="u">/test</span></div>
<div class="t" style="left:520.00px;top:1413.22px;font-size:21px;color:#000;letter-spacing:0.599px;-webkit-text-stroke:0.8px #000;">17:06 - 26 Feb</div>
<div class="t" style="left:978.00px;top:1405.61px;font-size:30px;color:#5e9df6;letter-spacing:0.775px;"><span class="u">anothermax</span></div>
<div class="t" style="left:1321.00px;top:1405.61px;font-size:30px;color:#ffffff;">-</div>
<div class="t" style="left:1626.60px;top:1405.61px;font-size:30px;color:#ffffff;">-</div>
<div class="t" style="left:2116.00px;top:1408.26px;font-size:24.5px;color:#d9d9d9;letter-spacing:0.894px;">Details</div>
<div class="t" style="left:78.60px;top:1515.22px;font-size:21px;color:#000;letter-spacing:1.566px;-webkit-text-stroke:0.8px #000;">Completed</div>
<div class="t" style="left:404.00px;top:1507.20px;font-size:30px;color:#5e9df6;letter-spacing:0.911px;"><span class="u">/test</span></div>
<div class="t" style="left:520.00px;top:1515.22px;font-size:21px;color:#000;letter-spacing:0.599px;-webkit-text-stroke:0.8px #000;">17:05 - 26 Feb</div>
<div class="t" style="left:978.00px;top:1507.61px;font-size:30px;color:#5e9df6;letter-spacing:0.775px;"><span class="u">anothermax</span></div>
<div class="t" style="left:1321.00px;top:1507.61px;font-size:30px;color:#ffffff;">-</div>
<div class="t" style="left:1626.60px;top:1507.61px;font-size:30px;color:#ffffff;">-</div>
<div class="t" style="left:2116.00px;top:1510.26px;font-size:24.5px;color:#d9d9d9;letter-spacing:0.894px;">Details</div>
<div class="t" style="left:79.00px;top:1617.22px;font-size:21px;color:#000;letter-spacing:0.897px;-webkit-text-stroke:0.8px #000;">Failed</div>
<div class="t" style="left:404.00px;top:1609.20px;font-size:30px;color:#5e9df6;letter-spacing:0.911px;"><span class="u">/test</span></div>
<div class="t" style="left:520.00px;top:1617.22px;font-size:21px;color:#000;letter-spacing:0.599px;-webkit-text-stroke:0.8px #000;">17:04 - 26 Feb</div>
<div class="t" style="left:978.00px;top:1609.61px;font-size:30px;color:#5e9df6;letter-spacing:0.775px;"><span class="u">anothermax</span></div>
<div class="t" style="left:1321.00px;top:1609.61px;font-size:30px;color:#ffffff;">-</div>
<div class="t" style="left:1626.60px;top:1609.61px;font-size:30px;color:#ffffff;">-</div>
<div class="t" style="left:2116.00px;top:1612.26px;font-size:24.5px;color:#d9d9d9;letter-spacing:0.894px;">Details</div>
<div class="t" style="left:78.60px;top:1719.22px;font-size:21px;color:#000;letter-spacing:1.566px;-webkit-text-stroke:0.8px #000;">Completed</div>
<div class="t" style="left:404.00px;top:1711.20px;font-size:30px;color:#5e9df6;letter-spacing:1.709px;"><span class="u">/kill</span></div>
<div class="t" style="left:506.00px;top:1719.22px;font-size:21px;color:#000;letter-spacing:0.719px;-webkit-text-stroke:0.8px #000;">11:44 - 26 Feb</div>
<div class="t" style="left:976.50px;top:1711.61px;font-size:30px;color:#5e9df6;letter-spacing:0.413px;"><span class="u">Max</span></div>
<div class="t" style="left:1321.00px;top:1711.61px;font-size:30px;color:#5e9df6;letter-spacing:1.137px;"><span class="u">fhfhfghfgh</span></div>
<div class="t" style="left:1626.60px;top:1711.61px;font-size:30px;color:#ffffff;">-</div>
<div class="t" style="left:2116.00px;top:1714.26px;font-size:24.5px;color:#d9d9d9;letter-spacing:0.894px;">Details</div>
<div class="t" style="left:78.60px;top:1821.22px;font-size:21px;color:#000;letter-spacing:1.566px;-webkit-text-stroke:0.8px #000;">Completed</div>
<div class="t" style="left:404.00px;top:1813.20px;font-size:30px;color:#5e9df6;letter-spacing:0.911px;"><span class="u">/test</span></div>
<div class="t" style="left:520.00px;top:1821.22px;font-size:21px;color:#000;letter-spacing:0.719px;-webkit-text-stroke:0.8px #000;">11:40 - 26 Feb</div>
<div class="t" style="left:978.00px;top:1813.61px;font-size:30px;color:#5e9df6;letter-spacing:0.775px;"><span class="u">anothermax</span></div>
<div class="t" style="left:1321.00px;top:1813.61px;font-size:30px;color:#ffffff;">-</div>
<div class="t" style="left:1626.60px;top:1813.61px;font-size:30px;color:#ffffff;">-</div>
<div class="t" style="left:2116.00px;top:1816.26px;font-size:24.5px;color:#d9d9d9;letter-spacing:0.894px;">Details</div>
<div class="t" style="left:2367.80px;top:267.22px;font-size:34px;color:#e6e6e6;letter-spacing:0.487px;">Filter per action</div>
<div class="t" style="left:2367.00px;top:347.61px;font-size:30px;color:#5e9df6;letter-spacing:-0.104px;">Show all</div>
<div class="t" style="left:2366.60px;top:436.00px;font-size:30px;color:#d6d6d6;letter-spacing:0.777px;-webkit-text-stroke:0.9px #d6d6d6;">Discord commands</div>
<div class="t" style="left:2367.00px;top:479.61px;font-size:30px;color:#a6a6a6;letter-spacing:0.25px;">/kick</div>
<div class="t" style="left:2367.00px;top:523.61px;font-size:30px;color:#a6a6a6;letter-spacing:0.668px;">/kickme</div>
<div class="t" style="left:2367.00px;top:567.61px;font-size:30px;color:#a6a6a6;letter-spacing:1.273px;">/reboot</div>
<div class="t" style="left:2367.00px;top:611.61px;font-size:30px;color:#a6a6a6;letter-spacing:0.599px;">/serverlist</div>
<div class="t" style="left:2367.00px;top:655.61px;font-size:30px;color:#a6a6a6;letter-spacing:0.704px;">/votelist</div>
<div class="t" style="left:2367.00px;top:699.61px;font-size:30px;color:#a6a6a6;letter-spacing:0.824px;">/shop</div>
<div class="t" style="left:2367.00px;top:743.61px;font-size:30px;color:#a6a6a6;letter-spacing:0.855px;">/rename</div>
<div class="t" style="left:2367.00px;top:787.61px;font-size:30px;color:#a6a6a6;letter-spacing:1.997px;">/mod</div>
<div class="t" style="left:2367.00px;top:831.61px;font-size:30px;color:#a6a6a6;letter-spacing:0.911px;">/test</div>
<div class="t" style="left:2367.00px;top:875.61px;font-size:30px;color:#a6a6a6;letter-spacing:0.822px;">/test2</div>
<div class="t" style="left:2367.00px;top:919.61px;font-size:30px;color:#a6a6a6;letter-spacing:1.248px;">/rcon</div>
<div class="t" style="left:2367.00px;top:963.61px;font-size:30px;color:#a6a6a6;letter-spacing:0.561px;">/broadcast</div>
<div class="t" style="left:2367.00px;top:1007.61px;font-size:30px;color:#a6a6a6;letter-spacing:0.419px;">/cancel</div>
<div class="t" style="left:2367.00px;top:1051.61px;font-size:30px;color:#a6a6a6;letter-spacing:1.015px;">/update</div>
<div class="t" style="left:2367.00px;top:1095.61px;font-size:30px;color:#a6a6a6;letter-spacing:0.79px;">/claim</div>
<div class="t" style="left:2367.00px;top:1139.61px;font-size:30px;color:#a6a6a6;letter-spacing:1.532px;">/ban</div>
<div class="t" style="left:2367.00px;top:1183.61px;font-size:30px;color:#a6a6a6;letter-spacing:1.305px;">/unban</div>
<div class="t" style="left:2367.00px;top:1227.61px;font-size:30px;color:#a6a6a6;letter-spacing:0.863px;">/tokens</div>
<div class="t" style="left:2367.00px;top:1271.61px;font-size:30px;color:#a6a6a6;letter-spacing:1.559px;">/kill</div>
<div class="t" style="left:2367.00px;top:1315.61px;font-size:30px;color:#a6a6a6;letter-spacing:0.915px;">/verify</div>
<div class="t" style="left:2367.00px;top:1359.61px;font-size:30px;color:#a6a6a6;letter-spacing:0.532px;">/connect</div>
<div class="t" style="left:2367.00px;top:1403.61px;font-size:30px;color:#a6a6a6;letter-spacing:1.539px;">/mute</div>
<div class="t" style="left:2367.00px;top:1447.61px;font-size:30px;color:#a6a6a6;letter-spacing:0.797px;">/whitelista</div>
<div class="t" style="left:2367.00px;top:1491.61px;font-size:30px;color:#a6a6a6;letter-spacing:0.994px;">/unwhitelist</div>
<div class="t" style="left:2367.00px;top:1535.61px;font-size:30px;color:#a6a6a6;letter-spacing:0.434px;">/search</div>
<div class="t" style="left:2366.40px;top:1623.61px;font-size:30px;color:#d6d6d6;letter-spacing:0.865px;-webkit-text-stroke:0.9px #d6d6d6;">Discord reactions</div>
<div class="t" style="left:2424.00px;top:1667.61px;font-size:30px;color:#a6a6a6;letter-spacing:0.476px;">grinning squinting face</div>
<div class="t" style="left:2425.00px;top:1717.61px;font-size:30px;color:#a6a6a6;letter-spacing:-0.18px;">token_500</div>
</div>
</body></html>
